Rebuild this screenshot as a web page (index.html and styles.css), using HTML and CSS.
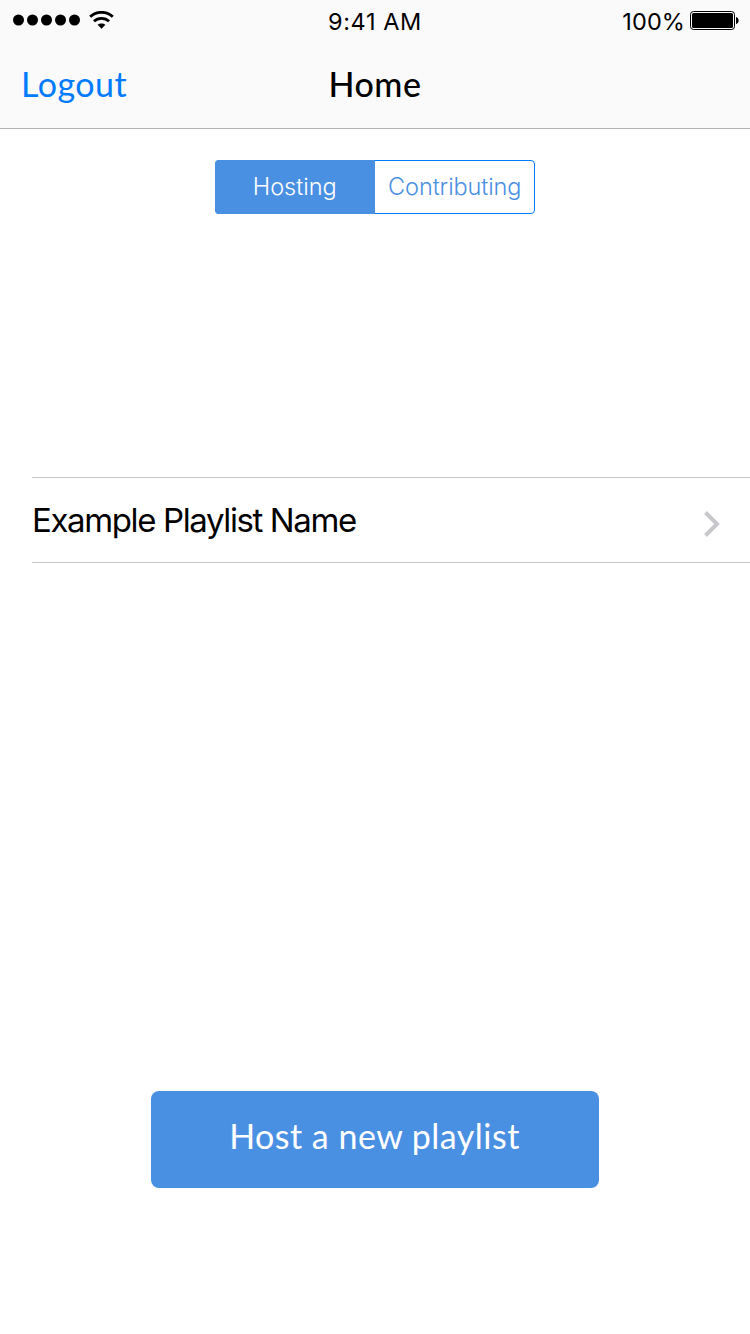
FILE: index.html
```html
<!DOCTYPE html>
<html lang="en">
<head>
<meta charset="utf-8">
<title>Home</title>
<link rel="stylesheet" href="styles.css">
</head>
<body>
<div class="screen">
  <header class="header">
    <div class="status">
      <div class="signal">
        <svg width="68" height="12" viewBox="0 0 68 12"><circle cx="5.5" cy="6" r="5.5"/><circle cx="19.5" cy="6" r="5.5"/><circle cx="33.5" cy="6" r="5.5"/><circle cx="47.5" cy="6" r="5.5"/><circle cx="61.5" cy="6" r="5.5"/></svg>
        <svg class="wifi" width="25" height="18" viewBox="0 0 25 18"><path d="M1.2 5.8C7.4-.2 17.6-.2 23.8 5.8M5 10.3C9 6.3 16 6.3 20 10.3" fill="none" stroke="#000" stroke-width="2.8"/><path d="M8.6 13.8C10.8 11.9 14.2 11.9 16.4 13.8L12.5 17.8Z"/></svg>
      </div>
      <div class="time">9:41 AM</div>
      <div class="power">
        <span class="percent">100%</span>
        <svg class="battery" width="50" height="20" viewBox="0 0 50 20"><rect x=".5" y=".5" width="44" height="18" rx="3" fill="none" stroke="#000"/><rect x="2" y="2" width="41" height="15" rx="1.5"/><path d="M46 6C49.5 6.7 49.5 12.3 46 13Z"/></svg>
      </div>
    </div>
    <nav class="nav">
      <a class="logout">Logout</a>
      <h1 class="title">Home</h1>
    </nav>
  </header>
  <main class="content">
    <div class="tabs">
      <div class="tab active"><span class="hosting">Hosting</span></div>
      <div class="tab"><span class="contributing">Contributing</span></div>
    </div>
    <div class="row">
      <span class="name">Example Playlist Name</span>
      <svg class="chevron" width="16" height="26" viewBox="0 0 16 26"><path d="M1.5 1.5L13 13L1.5 24.5" fill="none" stroke="#c7c7cc" stroke-width="4"/></svg>
    </div>
    <button class="host"><span class="hostlabel">Host a new playlist</span></button>
  </main>
</div>
</body>
</html>
```

FILE: styles.css
```css
* { box-sizing: border-box; }
body { margin: 0; background: #fff; color: #000; font-family: Inter, "Liberation Sans", sans-serif; }
svg { display: block; flex: none; }
.screen { width: 750px; height: 1334px; display: flex; flex-direction: column; overflow: hidden; }
.header { height: 129px; background: #fafafa; border-bottom: 1px solid #b2b2b2; }
.status { height: 42px; display: grid; grid-template-columns: 1fr auto 1fr; align-items: center; padding: 0 10px 0 13px; font-size: 23.5px; line-height: 44px; white-space: nowrap; }
.signal { display: flex; align-items: center; gap: 8px; padding-bottom: 4px; }
.time { letter-spacing: .6px; margin-left: -3px; }
.power { display: flex; justify-content: flex-end; align-items: center; gap: 6px; }
.percent { letter-spacing: .1px; margin-right: -1px; }
.battery { margin-bottom: 3px; }
.nav { height: 84px; display: grid; grid-template-columns: 1fr auto 1fr; align-items: center; padding: 0 21px; font-family: Lato, "Open Sans", sans-serif; font-size: 34px; line-height: 44px; }
.logout { color: #007aff; letter-spacing: .5px; }
.title { margin: 0; font: inherit; font-weight: 500; letter-spacing: .5px; }
.content { flex: 1; display: flex; flex-direction: column; }
.tabs { width: 320px; height: 54px; margin: 31px auto 0; display: flex; border: 1px solid #007aff; border-radius: 4px; background: #fff; }
.tab { flex: 1; display: flex; justify-content: center; align-items: center; color: #4a90e2; font-size: 23.5px; font-weight: 300; line-height: 52px; }
.tab.active { color: #fff; background: #4a90e2; margin: -1px 0 -1px -1px; border-radius: 4px 0 0 4px; }
.contributing { letter-spacing: -.1px; margin-left: 1px; }
.row { height: 86px; margin: 263px 0 0 32px; padding-right: 30px; display: flex; align-items: center; justify-content: space-between; border: solid #c8c7cc; border-width: 1px 0; font-size: 33px; line-height: 84px; }
.name { letter-spacing: -1.38px; }
.chevron { margin-top: 8px; }
.host { width: 448px; height: 97px; margin: 528px auto 0; padding: 0 0 7px; border: 0; border-radius: 8px; background: #4a90e2; color: #fff; font: 34px/90px Lato, "Open Sans", sans-serif; }
.hostlabel { letter-spacing: .48px; margin-left: -1px; }
```
